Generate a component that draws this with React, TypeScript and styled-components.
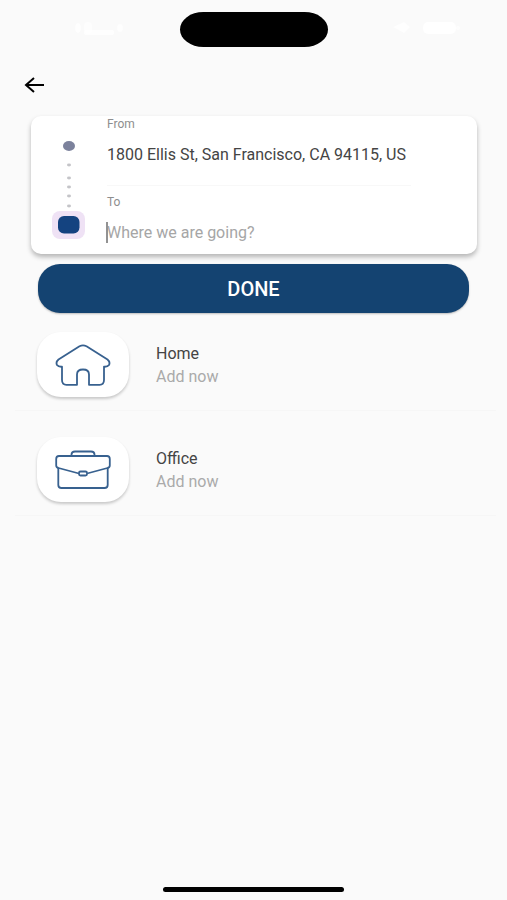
import React from "react";
import styled, { createGlobalStyle } from "styled-components";

const GlobalStyle = createGlobalStyle`
  * { box-sizing: border-box; }
  body {
    margin: 0;
    background: #fafafa;
    font-family: Roboto, "Liberation Sans", sans-serif;
  }
  button, input { font-family: inherit; }
`;

const Screen = styled.div`
  min-height: 100vh;
  display: flex;
  flex-direction: column;
  background: #fafafa;
`;

const StatusBar = styled.div`
  display: grid;
  grid-template-columns: 1fr 148px 1fr;
  align-items: center;
  padding: 12px 0 0 1px;
`;

const StatusSide = styled.div`
  display: flex;
  justify-content: center;
  padding: 0 0 4px 16px;
`;

const Island = styled.div`
  height: 35px;
  border-radius: 24px / 18px;
  background: #000;
`;

const Header = styled.header`
  display: flex;
  padding: 18px 14px 11px;
`;

const BackButton = styled.button`
  display: grid;
  place-items: center;
  width: 40px;
  height: 40px;
  padding: 0;
  border: 0;
  background: none;
  color: #000;
`;

const RouteForm = styled.form`
  display: flex;
  flex-direction: column;
  gap: 10px;
`;

const RouteCard = styled.div`
  display: grid;
  grid-template-columns: 76px 1fr;
  margin: 0 30px 0 31px;
  padding-right: 66px;
  border-radius: 10px;
  background: #fff;
  box-shadow: 0 3px 5px rgba(0, 0, 0, 0.28);
`;

const Field = styled.div<{ $divided?: boolean }>`
  display: flex;
  flex-direction: column;
  gap: 8px;
  padding: ${(p) => (p.$divided ? "0 0 17px" : "8px 0")};
  border-bottom: ${(p) => (p.$divided ? "1px solid #f8f8f8" : "0")};
`;

const FieldLabel = styled.label`
  font-size: 12px;
  line-height: 16px;
  color: #8e8e8e;
`;

const InputWrap = styled.div<{ $caret?: boolean }>`
  position: relative;
  display: flex;
  &::before {
    content: "";
    display: ${(p) => (p.$caret ? "block" : "none")};
    position: absolute;
    left: -1px;
    top: 4px;
    width: 2px;
    height: 21px;
    background: #929292;
  }
`;

const TextInput = styled.input`
  width: 100%;
  height: 28px;
  padding: 0;
  border: 0;
  outline: 0;
  background: none;
  font-size: 16px;
  color: #444;
  &::placeholder {
    color: #a6a6a6;
    opacity: 1;
  }
`;

const DoneButton = styled.button`
  height: 49px;
  margin: 0 38px;
  padding: 0;
  border: 0;
  border-radius: 22px;
  background: #144371;
  color: #fff;
  font-size: 20px;
  font-weight: 500;
  box-shadow: 0 1px 2px rgba(0, 0, 0, 0.25);
`;

const PlaceList = styled.ul`
  display: flex;
  flex-direction: column;
  gap: 26px;
  margin: 19px 11px 0 15px;
  padding: 0;
  list-style: none;
`;

const PlaceItem = styled.li`
  border-bottom: 1px solid #f6f6f6;
`;

const PlaceButton = styled.button`
  display: flex;
  align-items: flex-start;
  gap: 27px;
  width: 100%;
  padding: 0 22px 13px;
  border: 0;
  background: none;
  text-align: left;
`;

const PlaceTile = styled.span`
  display: grid;
  place-items: center;
  width: 92px;
  height: 65px;
  border-radius: 24px;
  background: #fff;
  box-shadow: 0 2px 3px rgba(0, 0, 0, 0.2);
`;

const PlaceText = styled.span`
  display: flex;
  flex-direction: column;
  padding-top: 10px;
  font-size: 16px;
  line-height: 23px;
`;

const PlaceName = styled.span`
  color: #444;
`;

const PlaceHint = styled.span`
  color: #aaa;
`;

const HomeIndicator = styled.div`
  width: 181px;
  height: 5px;
  margin: auto auto 8px;
  border-radius: 3px;
  background: #000;
`;

const ArrowIcon = () => (
  <svg width="20" height="18" viewBox="0 0 20 18" fill="none" stroke="currentColor" strokeWidth="2" aria-hidden="true">
    <path d="M10 2 2 9l8 7M2 9h18" />
  </svg>
);

const ClockMark = () => (
  <svg width="50" height="16" viewBox="0 0 50 16" fill="#fff" aria-hidden="true">
    <ellipse cx="4" cy="8" rx="3" ry="5" opacity=".7" />
    <rect x="10" y="2" width="8" height="12" rx="4" opacity=".6" />
    <rect x="10" y="10" width="30" height="5" rx="2" opacity=".8" />
    <ellipse cx="46" cy="8" rx="3" ry="4" opacity=".7" />
  </svg>
);

const SignalMark = () => (
  <svg width="68" height="16" viewBox="0 0 68 16" fill="#fff" aria-hidden="true">
    <path d="M1 7 12 2l6 5-6 6z" opacity=".7" />
    <rect x="31" y="2" width="33" height="12" rx="5" opacity=".9" />
    <circle cx="66" cy="8" r="2" opacity=".6" />
  </svg>
);

const RouteRail = () => (
  <svg width="76" height="138" viewBox="0 0 76 138" aria-hidden="true">
    <ellipse cx="38" cy="30" rx="6" ry="5" fill="#7c829c" />
    <g fill="#c4c4c8">
      {[49, 62, 71, 80, 90].map((y) => (
        <ellipse key={y} cx="38" cy={y} rx="2" ry="1.4" />
      ))}
    </g>
    <rect x="21" y="95" width="33" height="28" rx="8" fill="#efe2f5" />
    <rect x="27" y="100" width="21.500" height="17.500" rx="6" fill="#144380" />
  </svg>
);

const HomeIcon = () => (
  <svg width="56" height="42" viewBox="0 0 56 42" fill="none" stroke="#38618f" strokeWidth="1.8" strokeLinejoin="round" aria-hidden="true">
    <path d="M24.500 2.200Q28 .5 31.500 2.200L52.500 15.500Q55.500 18 54 21Q52.500 23 49 22.700V36Q49 40.800 44.500 40.800H34V30.500Q34 25.500 28 25.500T22 30.500V40.800H11.500Q7 40.800 7 36V22.700Q3.500 23 2 21Q.500 18 3.500 15.500Z" />
  </svg>
);

const BriefcaseIcon = () => (
  <svg width="56" height="40" viewBox="0 0 56 40" fill="none" stroke="#38618f" strokeWidth="1.8" strokeLinejoin="round" aria-hidden="true">
    <path d="M16.500 6V4.500Q16.500 1.500 20 1.500H36Q39.500 1.500 39.500 4.500V6" />
    <path d="M24 23.500 3.500 18Q1.200 17.500 1.200 15.500V9Q1.200 6 4 6H52Q54.800 6 54.800 9V15.500Q54.800 17.500 52.500 18L32 23.500" />
    <path d="M3.300 18V35Q3.300 38 6.500 38H49.500Q52.700 38 52.700 35V18" />
    <rect x="24" y="21.500" width="8" height="4" rx="1.500" />
  </svg>
);

const places = [
  { name: "Home", hint: "Add now", icon: <HomeIcon /> },
  { name: "Office", hint: "Add now", icon: <BriefcaseIcon /> },
];

export default function App() {
  return (
    <Screen>
      <GlobalStyle />
      <StatusBar>
        <StatusSide><ClockMark /></StatusSide>
        <Island />
        <StatusSide><SignalMark /></StatusSide>
      </StatusBar>
      <Header>
        <BackButton type="button" aria-label="Back"><ArrowIcon /></BackButton>
      </Header>
      <RouteForm onSubmit={(e) => e.preventDefault()}>
        <RouteCard>
          <RouteRail />
          <div>
            <Field $divided>
              <FieldLabel htmlFor="from">From</FieldLabel>
              <InputWrap>
                <TextInput id="from" defaultValue="1800 Ellis St, San Francisco, CA 94115, US" />
              </InputWrap>
            </Field>
            <Field>
              <FieldLabel htmlFor="to">To</FieldLabel>
              <InputWrap $caret>
                <TextInput id="to" placeholder="Where we are going?" />
              </InputWrap>
            </Field>
          </div>
        </RouteCard>
        <DoneButton type="submit">DONE</DoneButton>
      </RouteForm>
      <PlaceList>
        {places.map((place) => (
          <PlaceItem key={place.name}>
            <PlaceButton type="button">
              <PlaceTile>{place.icon}</PlaceTile>
              <PlaceText>
                <PlaceName>{place.name}</PlaceName>
                <PlaceHint>{place.hint}</PlaceHint>
              </PlaceText>
            </PlaceButton>
          </PlaceItem>
        ))}
      </PlaceList>
      <HomeIndicator />
    </Screen>
  );
}
